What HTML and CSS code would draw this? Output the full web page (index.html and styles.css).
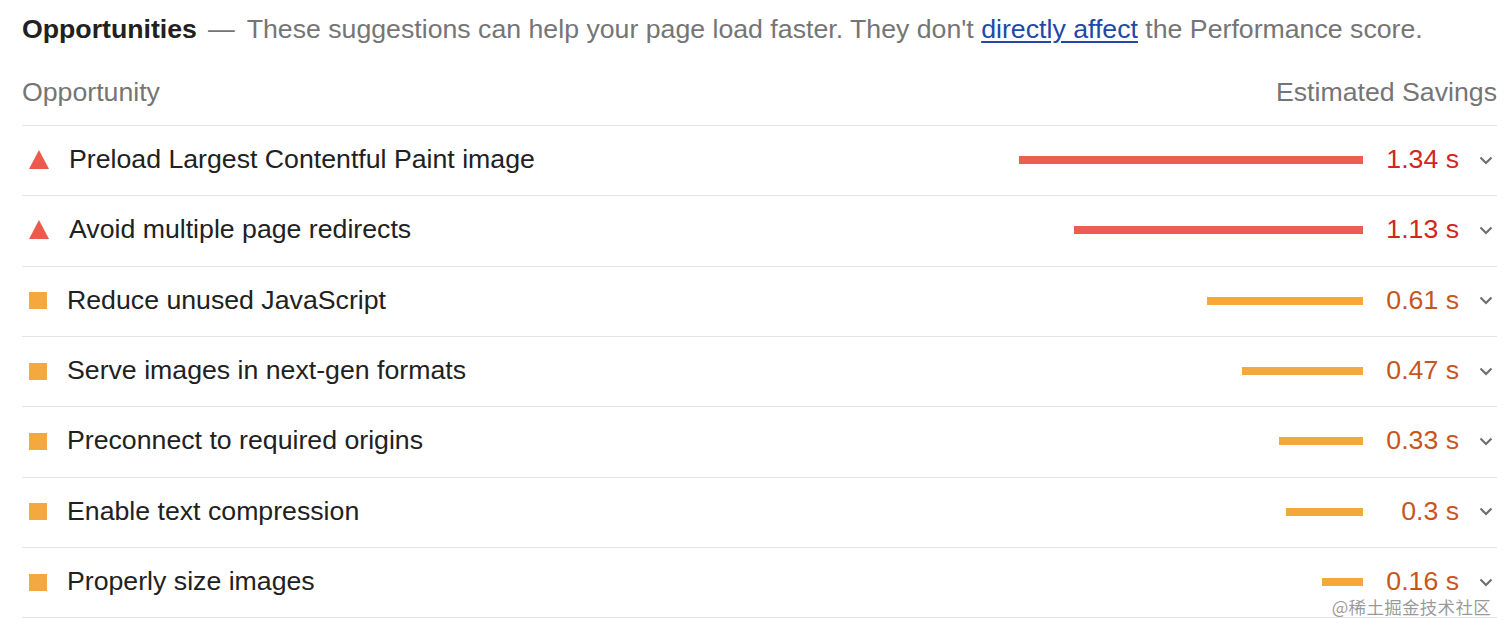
FILE: index.html
```html
<!DOCTYPE html>
<html lang="en">
<head>
<meta charset="utf-8">
<title>Opportunities</title>
<link rel="stylesheet" href="styles.css">
</head>
<body>
<div class="page">
  <div class="title"><span class="title-main">Opportunities</span><span class="title-desc"><span class="dash">—</span>These suggestions can help your page load faster. They don't <a class="link" href="#">directly affect</a> the Performance score.</span></div>
  <div class="colhead"><span>Opportunity</span><span>Estimated Savings</span></div>
  <div class="list">
    <div class="row fail"><span class="icon tri"></span><span class="name">Preload Largest Contentful Paint image</span><span class="barwrap"><span class="bar" style="width:344px"></span></span><span class="val">1.34 s</span><span class="chev"><svg width="14" height="9" viewBox="0 0 14 9"><path d="M1.5 1.5 L7 7 L12.5 1.5" fill="none" stroke="#6f6f6f" stroke-width="2.2"/></svg></span></div>
    <div class="row fail"><span class="icon tri"></span><span class="name">Avoid multiple page redirects</span><span class="barwrap"><span class="bar" style="width:289px"></span></span><span class="val">1.13 s</span><span class="chev"><svg width="14" height="9" viewBox="0 0 14 9"><path d="M1.5 1.5 L7 7 L12.5 1.5" fill="none" stroke="#6f6f6f" stroke-width="2.2"/></svg></span></div>
    <div class="row avg"><span class="icon sq"></span><span class="name">Reduce unused JavaScript</span><span class="barwrap"><span class="bar" style="width:156px"></span></span><span class="val">0.61 s</span><span class="chev"><svg width="14" height="9" viewBox="0 0 14 9"><path d="M1.5 1.5 L7 7 L12.5 1.5" fill="none" stroke="#6f6f6f" stroke-width="2.2"/></svg></span></div>
    <div class="row avg"><span class="icon sq"></span><span class="name">Serve images in next-gen formats</span><span class="barwrap"><span class="bar" style="width:121px"></span></span><span class="val">0.47 s</span><span class="chev"><svg width="14" height="9" viewBox="0 0 14 9"><path d="M1.5 1.5 L7 7 L12.5 1.5" fill="none" stroke="#6f6f6f" stroke-width="2.2"/></svg></span></div>
    <div class="row avg"><span class="icon sq"></span><span class="name">Preconnect to required origins</span><span class="barwrap"><span class="bar" style="width:84px"></span></span><span class="val">0.33 s</span><span class="chev"><svg width="14" height="9" viewBox="0 0 14 9"><path d="M1.5 1.5 L7 7 L12.5 1.5" fill="none" stroke="#6f6f6f" stroke-width="2.2"/></svg></span></div>
    <div class="row avg"><span class="icon sq"></span><span class="name">Enable text compression</span><span class="barwrap"><span class="bar" style="width:77px"></span></span><span class="val">0.3 s</span><span class="chev"><svg width="14" height="9" viewBox="0 0 14 9"><path d="M1.5 1.5 L7 7 L12.5 1.5" fill="none" stroke="#6f6f6f" stroke-width="2.2"/></svg></span></div>
    <div class="row avg"><span class="icon sq"></span><span class="name">Properly size images</span><span class="barwrap"><span class="bar" style="width:41px"></span></span><span class="val">0.16 s</span><span class="chev"><svg width="14" height="9" viewBox="0 0 14 9"><path d="M1.5 1.5 L7 7 L12.5 1.5" fill="none" stroke="#6f6f6f" stroke-width="2.2"/></svg></span></div>
  </div>
  <div class="watermark">@稀土掘金技术社区</div>
</div>
</body>
</html>
```
FILE: styles.css
```css
html, body {
  margin: 0;
  padding: 0;
  background: #ffffff;
}
body {
  font-family: "Liberation Sans", Arial, Helvetica, sans-serif;
  font-size: 26.7px;
  color: #212121;
}
.page {
  position: relative;
  width: 1475px;
  height: 637px;
  padding-left: 22px;
  box-sizing: content-box;
}
.title {
  padding-top: 13px;
  line-height: 32px;
  white-space: nowrap;
}
.title-main {
  font-weight: bold;
  color: #212121;
}
.title-desc {
  color: #757575;
}
.dash {
  display: inline-block;
  margin: 0 12px 0 11px;
}
.link {
  color: #2049a6;
  text-decoration: underline;
  text-underline-offset: 3px;
}
.colhead {
  display: flex;
  justify-content: space-between;
  margin-top: 31px;
  line-height: 32px;
  padding-bottom: 17px;
  color: #757575;
  border-bottom: 1px solid #e4e4e4;
}
.list {
  display: flex;
  flex-direction: column;
}
.row {
  display: flex;
  align-items: center;
  height: 70.33px;
  box-sizing: border-box;
  border-bottom: 1px solid #e4e4e4;
  padding-bottom: 3px;
  line-height: 32px;
}
.icon {
  flex: none;
  margin-left: 7px;
  margin-right: 20px;
}
.tri {
  width: 0;
  height: 0;
  border-left: 10px solid transparent;
  border-right: 10px solid transparent;
  border-bottom: 19px solid #eb5b4d;
  margin-top: 1px;
}
.sq {
  width: 18px;
  height: 17px;
  background: #f4a83e;
  margin-top: 2px;
}
.name {
  flex: none;
  white-space: nowrap;
}
.barwrap {
  flex: 1;
  display: flex;
  justify-content: flex-end;
  margin-top: 2px;
}
.bar {
  display: block;
  height: 8px;
}
.fail .bar { background: #eb5f50; }
.avg .bar { background: #f4a83c; }
.val {
  flex: none;
  width: 96px;
  text-align: right;
}
.fail .val { color: #d1271b; }
.avg .val { color: #c8551c; }
.chev {
  flex: none;
  width: 38px;
  display: flex;
  justify-content: flex-start;
  padding-left: 20px;
  box-sizing: border-box;
  margin-top: 2px;
}
.chev svg { display: block; }
.watermark {
  position: absolute;
  right: 6px;
  top: 596px;
  font-family: "Noto Sans CJK SC", "Liberation Sans", sans-serif;
  font-size: 17.5px;
  line-height: 22px;
  color: rgba(120, 120, 120, 0.75);
  letter-spacing: 0.3px;
}
```
